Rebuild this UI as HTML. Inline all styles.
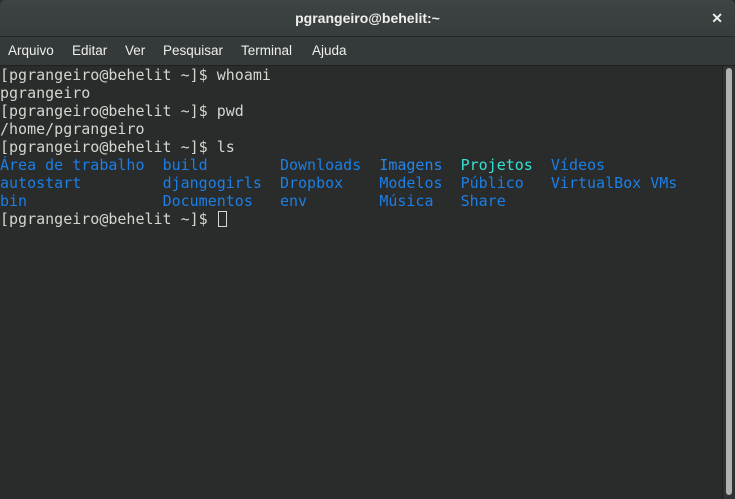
<!DOCTYPE html>
<html><head><meta charset="utf-8"><style>
body{margin:0;width:735px;height:499px;overflow:hidden;background:#2a2b2b;font-family:"Liberation Sans",sans-serif}
.title{position:absolute;left:0;top:0;width:735px;height:36px;background:linear-gradient(#3e4444,#373c3c);border-bottom:1px solid #232727;border-radius:5px 5px 0 0;color:#eeeeec;font-weight:bold;font-size:14px;text-align:center;line-height:36px}
.x{position:absolute;right:12px;top:0;font-size:14px;font-weight:bold}
.menu{position:absolute;left:0;top:37px;width:735px;height:28px;background:#343a3a;color:#eeeeec;font-size:13.5px;line-height:28px;border-bottom:1px solid #1e2121}
.menu span{position:absolute;top:0}
pre{position:absolute;left:0;top:66px;margin:0;font-family:"DejaVu Sans Mono",monospace;font-size:15px;line-height:18px;color:#d3d7cf}
.b{color:#1b7fe6}.l{color:#2585ea}.c{color:#34e2d2}
.cur{display:inline-block;width:9px;height:16px;border:1px solid #d3d7cf;box-sizing:border-box;vertical-align:-3px;margin-left:1px}
.sb{position:absolute;left:722px;top:66px;width:13px;height:433px;background:#2f3232;border-left:1px solid #1e2020}
.th{position:absolute;left:726px;top:68px;width:6px;height:427px;background:#b0b2b0;border-radius:3px}
</style></head><body>
<div class="title">pgrangeiro@behelit:~<span class="x">✕</span></div>
<div class="menu"><span style="left:8px">Arquivo</span><span style="left:72px">Editar</span><span style="left:125px">Ver</span><span style="left:163px">Pesquisar</span><span style="left:241px">Terminal</span><span style="left:312px">Ajuda</span></div>
<pre>[pgrangeiro@behelit ~]$ whoami
pgrangeiro
[pgrangeiro@behelit ~]$ pwd
/home/pgrangeiro
[pgrangeiro@behelit ~]$ ls
<span class="b">Área de trabalho</span>  <span class="b">build</span>        <span class="b">Downloads</span>  <span class="l">Imagens</span>  <span class="c">Projetos</span>  <span class="b">Vídeos</span>
<span class="b">autostart</span>         <span class="b">djangogirls</span>  <span class="b">Dropbox</span>    <span class="b">Modelos</span>  <span class="b">Público</span>   <span class="b">VirtualBox VMs</span>
<span class="b">bin</span>               <span class="b">Documentos</span>   <span class="b">env</span>        <span class="b">Música</span>   <span class="b">Share</span>
[pgrangeiro@behelit ~]$ <span class="cur"></span></pre>
<div class="sb"></div><div class="th"></div>
</body></html>
